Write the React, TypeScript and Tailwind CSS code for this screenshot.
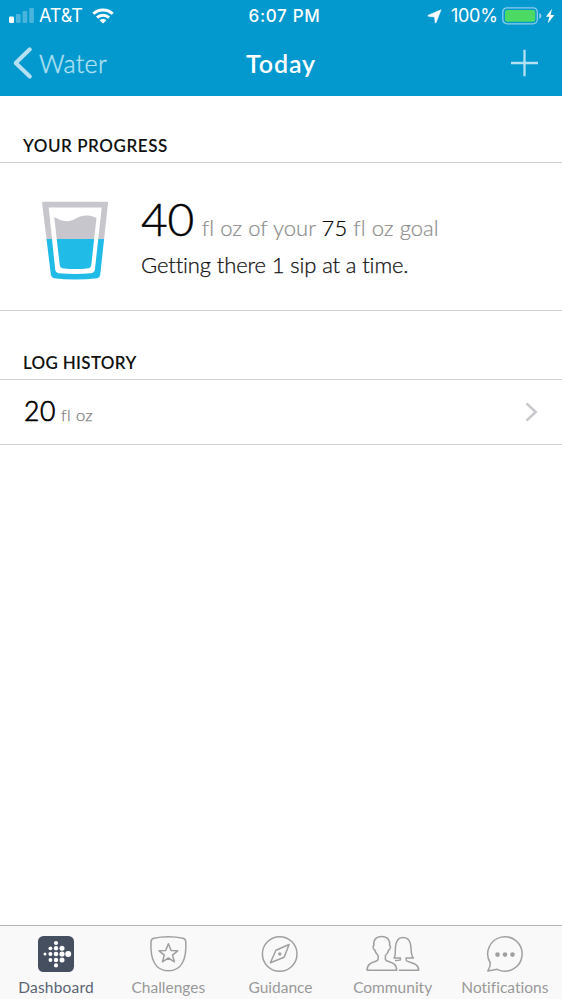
import type { ReactNode } from "react";

function StatusBar() {
  return (
    <div className="flex h-8 items-center font-['Inter',sans-serif] text-[18px] leading-8 text-white">
      <div className="flex flex-1 items-center pl-[9px]">
        <svg width="26" height="16" viewBox="0 0 26 16" fill="#fff">
          <rect x="0" y="8.5" width="5" height="6.5" rx="1.3" />
          <g opacity="0.28">
            <rect x="7" y="6" width="4.6" height="9" rx="1.3" />
            <rect x="13.6" y="3" width="4.6" height="12" rx="1.3" />
            <rect x="20.3" y="0" width="4.6" height="15" rx="1.3" />
          </g>
        </svg>
        <span className="ml-[4px] w-[44px] whitespace-nowrap text-[18px] tracking-[-0.1px]">AT&amp;T</span>
        <svg className="-mt-[1px] ml-[9px]" width="22" height="16" viewBox="0 0 22 16" fill="none" stroke="#fff" strokeWidth="3">
          <path d="M1.3 5.8C6.6 .6 15.4 .6 20.7 5.8" />
          <path d="M5 9.6C8.3 6.5 13.7 6.5 17 9.6" />
          <path d="M7.6 12.3C9.5 10.5 12.5 10.5 14.4 12.3L11 15.6Z" fill="#fff" stroke="none" />
        </svg>
      </div>
      <span className="pl-[5px] text-[17px] font-medium tracking-[0.7px]">6:07 PM</span>
      <div className="flex flex-1 items-center justify-end pr-[7px]">
        <svg width="15" height="15" viewBox="0 0 15 15" fill="#fff" stroke="#fff" strokeWidth=".6">
          <path d="M14 .8 9 13.7Q8.6 14.4 8.2 13.5L7.6 7.9 1.3 7.2Q.2 6.7 1.3 6.2Z" />
        </svg>
        <span className="ml-[9px] w-[47px] whitespace-nowrap tracking-[-0.3px]">100%</span>
        <svg className="-mt-[1px] ml-[4px]" width="53" height="18" viewBox="0 0 53 18">
          <rect x=".8" y=".8" width="34.5" height="16" rx="4.2" fill="none" stroke="#8ccdea" strokeWidth="1.3" />
          <rect x="3" y="3" width="30.3" height="11.8" rx="2" fill="#4cd964" />
          <path d="M37.2 5.9Q39.6 6.8 39.6 8.8T37.2 11.7Z" fill="#8ccdea" />
          <path d="M50 1.8 43.9 9.8H47.4L45.7 16.6 52.4 8H48.6Z" fill="#fff" />
        </svg>
      </div>
    </div>
  );
}

function NavBar() {
  return (
    <div className="flex h-16 items-center pb-[2px] leading-[62px]">
      <div className="flex flex-1 items-center pl-[12px] text-[#b3e1f2]">
        <svg width="21" height="34" viewBox="0 0 21 34" fill="none" stroke="currentColor" strokeWidth="4" strokeLinecap="round" strokeLinejoin="round">
          <path d="M17.8 3.3 3.7 17 17.8 30.5" />
        </svg>
        <span className="ml-[6px] text-[25px] font-light tracking-[0.3px] [-webkit-text-stroke:0.35px_currentColor]">Water</span>
      </div>
      <span className="pl-[11px] text-[25px] font-semibold tracking-[0.9px] text-white">Today</span>
      <div className="flex flex-1 justify-end pr-[23px]">
        <svg className="-mt-[1px]" width="29" height="28" viewBox="0 0 29 28" stroke="#b3e1f2" strokeWidth="2.3">
          <path d="M1 14H28M14.5 .7V27.3" />
        </svg>
      </div>
    </div>
  );
}

function SectionTitle({ children }: { children: ReactNode }) {
  return <h2 className="h-[33px] pl-[23px] text-[17px] leading-[34px] font-semibold text-[#111]">{children}</h2>;
}

function WaterGlass() {
  return (
    <svg className="mt-[9px]" width="68" height="80" viewBox="0.5 0 68 80">
      <defs>
        <linearGradient id="level" gradientUnits="userSpaceOnUse" x1="0" y1="0" x2="0" y2="80">
          <stop offset="0.4688" stopColor="#c7c6cc" />
          <stop offset="0.4688" stopColor="#21bbe7" />
        </linearGradient>
      </defs>
      <path
        fill="url(#level)"
        fillRule="evenodd"
        d="M1.8 .7H65.2Q66.7 .7 66.5 2.2L58.7 74Q58.3 76.5 55.8 77.2 46 78.5 34 78.5T12.4 77.2Q9.9 76.5 9.4 74L.6 2.2Q.4 .7 1.8 .7ZM7.2 6.5 13.7 68.5Q14.2 71.7 17.4 72.2 34 73.8 49.6 72.2 53 71.7 53.4 68.5L60.2 6.5Z"
      />
      <path fill="url(#level)" d="M12.7 16.3C18 18.5 22 21.5 29 19.8 36 17.5 38 14.5 45 14.5 50 14.5 52 15.8 55 16.8L49.7 64.5Q49.4 66.8 47.2 67.2 34 69 20.8 67.2 18.6 66.8 18.3 64.5Z" />
    </svg>
  );
}

function DashboardIcon() {
  const dots = [
    [18, 7, 2.1],
    [12.4, 12.3, 1.9], [18, 12.3, 2.2], [24, 12.3, 2.5],
    [7, 18, 1.5], [12.4, 18, 2], [18, 18, 2.3], [24, 18, 2.6], [30.2, 18, 3],
    [12.4, 24, 1.9], [18, 24, 2.2], [24, 24, 2.5],
    [18, 29.4, 2.1],
  ];

  return (
    <svg width="56" height="40" viewBox="-10 -2 56 40">
      <rect width="36" height="36" rx="5.5" fill="#464f60" />
      {dots.map(([x, y, r]) => (
        <circle key={`${x}-${y}`} cx={x} cy={y} r={r} fill="#fff" />
      ))}
    </svg>
  );
}

function LineIcon({ children }: { children: ReactNode }) {
  return (
    <svg width="56" height="40" viewBox="0 0 56 40" fill="none" stroke="#a0a0a0" strokeWidth="1.5" strokeLinejoin="round" strokeLinecap="round">
      {children}
    </svg>
  );
}

const tabs = [
  { label: "Dashboard", active: true, icon: <DashboardIcon /> },
  {
    label: "Challenges",
    icon: (
      <LineIcon>
        <g transform="translate(.4 0)">
          <path d="M28 2.7Q36 2.7 42.5 4.2 45.3 4.8 45.4 7.7C46.3 25 41.5 36.8 28 36.8S9.7 25 10.6 7.7Q10.7 4.8 13.5 4.2 20 2.7 28 2.7Z" />
          <path d="M28 9.8 30.7 16.4 37.3 16.8 32.1 21.1 34 27.8 28 24 22 27.8 23.9 21.1 18.7 16.8 25.3 16.4Z" />
        </g>
      </LineIcon>
    ),
  },
  {
    label: "Guidance",
    icon: (
      <LineIcon>
        <circle cx="27.7" cy="20" r="17.3" />
        <path d="M37.1 10.5 32.1 23.3 18.4 28.8 23.9 16.2Z" />
        <circle cx="27.8" cy="20" r="1.7" fill="#a0a0a0" stroke="none" />
      </LineIcon>
    ),
  },
  {
    label: "Community",
    icon: (
      <LineIcon>
        <g transform="translate(2.4 0)">
          <path d="M14.3 2.5C8.5 2.5 5.6 6.4 6.5 11.5 5 11.8 5.8 15.6 7.4 16 7.8 18.3 9 20 10.7 21.5V25.5C9.8 28.8-.3 26.7-.3 36.3H29.3C29.3 26.7 19 28.8 18 25.5V21.5C19.7 20 20.8 18.3 21.3 16 23 15.6 23.8 11.8 22.2 11.5 23 6.4 20.2 2.5 14.3 2.5Z" />
          <path d="M28.2 26.5C30.4 26.5 32 26.3 33 25.8V24.1H26.6C29 20.5 27 15.2 28.7 9.4 29.8 5.4 32.2 3.5 35.7 3.5S41.8 5.4 42.9 9.4C44.5 15.2 42.8 20.5 46 24.1H38.7V26.2C40 29 51.3 27.8 51.3 36.3H32" />
        </g>
      </LineIcon>
    ),
  },
  {
    label: "Notifications",
    icon: (
      <LineIcon>
        <g transform="translate(-.2 -.2)">
          <path d="M13.5 29.2A17.2 17.2 0 1 1 20.4 35.5L11.1 37.2Q13.4 33.7 13.5 29.2Z" />
          <g fill="#a0a0a0" stroke="none">
            <circle cx="20.7" cy="20.8" r="2.3" />
            <circle cx="28.2" cy="20.8" r="2.3" />
            <circle cx="35.7" cy="20.8" r="2.3" />
          </g>
        </g>
      </LineIcon>
    ),
  },
];

export default function App() {
  return (
    <div className="flex h-[999px] w-full flex-col bg-white font-['Lato',sans-serif] [font-variant-ligatures:none]">
      <header className="h-24 bg-[#0399cf]">
        <StatusBar />
        <NavBar />
      </header>

      <main className="flex-1 pt-[33px]">
        <SectionTitle>
          <span className="tracking-[0.55px]">YOUR PROGRESS</span>
        </SectionTitle>
        <section className="flex h-[149px] items-center border-y border-[#d0d0d0] pl-[42px]">
          <WaterGlass />
          <div className="ml-[31px] whitespace-nowrap">
            <p className="h-[54px] text-[22px] leading-[53px] font-light tracking-[0.05px] text-[#8d8d8d] [-webkit-text-stroke:0.2px_currentColor]">
              <span className="text-[46px] tracking-[-0.3px] text-black [-webkit-text-stroke:0.5px_currentColor]">40</span>
              <span className="ml-[8px]">fl oz of your </span>
              <span className="text-black">75</span> fl oz goal
            </p>
            <p className="h-[36px] text-[22px] leading-[38px] font-light tracking-[-0.12px] text-[#111] [-webkit-text-stroke:0.25px_currentColor]">
              Getting there 1 sip at a time.
            </p>
          </div>
        </section>

        <div className="h-[35px]" />
        <SectionTitle>
          <span className="tracking-[0.3px]">LOG HISTORY</span>
        </SectionTitle>
        <section className="flex h-[66px] items-center border-y border-[#d0d0d0] pr-[24px] pl-[24px]">
          <p className="flex-1 pb-px text-[26.5px] font-light tracking-[0.6px] text-black [-webkit-text-stroke:0.7px_currentColor]">
            20<span className="ml-[5px] text-[16.5px] tracking-[0.4px] text-[#808080] [-webkit-text-stroke:0.25px_currentColor]">fl oz</span>
          </p>
          <svg className="-mt-px" width="13" height="20" viewBox="0 0 13 20" fill="none" stroke="#c7c7cc" strokeWidth="2.5">
            <path d="M1.5 1.3 10.7 10 1.5 18.7" />
          </svg>
        </section>
      </main>

      <nav className="grid h-[74px] grid-cols-[repeat(5,112.2px)] border-t border-[#b5b5b5] bg-[#f9f9f9]">
        {tabs.map((tab) => (
          <div key={tab.label} className="flex flex-col items-center pt-[8px]">
            {tab.icon}
            <span
              className={
                tab.active
                  ? "mt-[3px] text-[15.5px] leading-[20px] tracking-[0.2px] text-[#5b6475]"
                  : "mt-[3px] text-[15.5px] leading-[20px] text-[#999]"
              }
            >
              {tab.label}
            </span>
          </div>
        ))}
      </nav>
    </div>
  );
}
